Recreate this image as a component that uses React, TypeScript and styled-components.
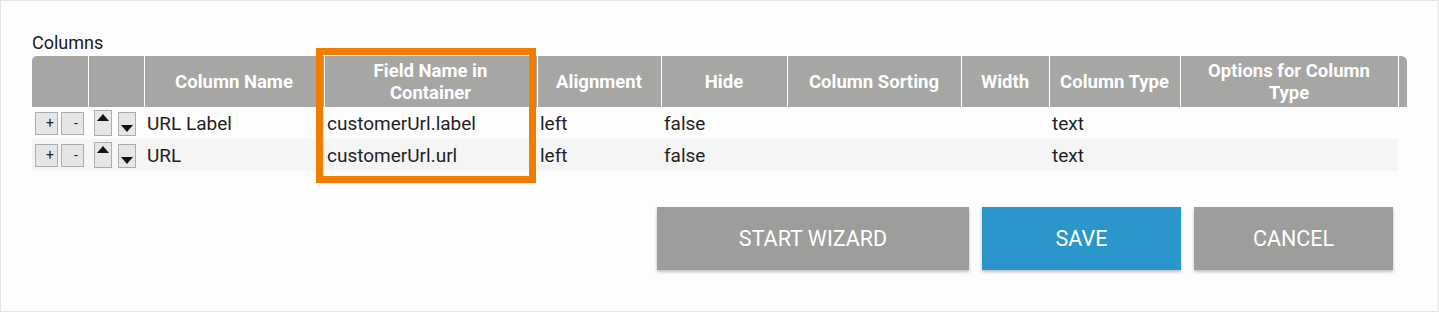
import * as React from "react";
import styled, { createGlobalStyle } from "styled-components";

const GlobalStyle = createGlobalStyle`
  html, body {
    margin: 0;
    padding: 0;
    background: #ffffff;
    font-family: Roboto, "Liberation Sans", sans-serif;
  }
`;

const Frame = styled.section`
  position: relative;
  box-sizing: border-box;
  width: 1439px;
  height: 312px;
  border: 1px solid #e4e4e4;
  background: #fdfdfd;
  padding: 31px 31px 0 31px;
`;

const Label = styled.div`
  font-size: 18px;
  line-height: 21px;
  color: #1a1a1a;
  margin-bottom: 3px;
`;

const Table = styled.table`
  border-collapse: collapse;
  table-layout: fixed;
  width: 1375px;
`;

const HeadCell = styled.th<{ $first?: boolean }>`
  background: #a6a6a5;
  color: #ffffff;
  font-weight: 700;
  font-size: 18.5px;
  line-height: 22px;
  height: 51px;
  padding: 0 9px;
  text-align: center;
  vertical-align: middle;
  border-left: ${(p) => (p.$first ? "none" : "1px solid #ffffff")};
  box-sizing: border-box;

  &:first-child {
    border-top-left-radius: 5px;
  }
  &:last-child {
    border-top-right-radius: 6px;
    padding: 0;
  }
`;

const Row = styled.tr<{ $striped?: boolean }>`
  background: ${(p) => (p.$striped ? "#f5f5f5" : "transparent")};
`;

const Cell = styled.td<{ $gutter?: boolean }>`
  height: 32px;
  padding: 0 3px;
  font-size: 19px;
  color: #1f1f1f;
  vertical-align: middle;
  white-space: nowrap;
  background: ${(p) => (p.$gutter ? "#fdfdfd" : "inherit")};
`;

const ToolCell = styled.td`
  height: 32px;
  padding: 0 0 0 3px;
  vertical-align: middle;
`;

const ButtonPair = styled.div<{ $gap: number; $offset: number }>`
  display: flex;
  align-items: flex-start;
  gap: ${(p) => p.$gap}px;
  padding-left: ${(p) => p.$offset}px;
`;

const SmallButton = styled.button`
  box-sizing: border-box;
  width: 23px;
  height: 23px;
  padding: 0 0 0 7px;
  border: 1px solid #adadad;
  background: #e6e6e6;
  font-family: Roboto, "Liberation Sans", sans-serif;
  font-size: 14px;
  color: #222;
  line-height: 20px;
`;

const ArrowButton = styled.button<{ $down?: boolean }>`
  box-sizing: border-box;
  width: 18px;
  height: ${(p) => (p.$down ? "24px" : "26px")};
  margin-top: ${(p) => (p.$down ? "1px" : "-1px")};
  padding: 0;
  border: 1px solid #adadad;
  background: #e6e6e6;
  display: flex;
  justify-content: center;
  align-items: ${(p) => (p.$down ? "flex-end" : "flex-start")};
  padding-top: ${(p) => (p.$down ? "0" : "3px")};
  padding-bottom: ${(p) => (p.$down ? "3px" : "0")};
`;

const Actions = styled.div`
  display: flex;
  justify-content: flex-end;
  gap: 13px;
  margin-top: 36px;
  padding-right: 14px;
`;

const ActionButton = styled.button<{ $primary?: boolean; $w: number }>`
  width: ${(p) => p.$w}px;
  height: 63px;
  border: none;
  background: ${(p) => (p.$primary ? "#2b96cc" : "#9d9d9b")};
  color: #ffffff;
  font-family: Roboto, "Liberation Sans", sans-serif;
  font-size: 21.5px;
  box-shadow: 0 2px 3px rgba(0, 0, 0, 0.25);
`;

const Highlight = styled.div`
  position: absolute;
  left: 315px;
  top: 47px;
  width: 220px;
  height: 135px;
  box-sizing: border-box;
  border: 7px solid #f07c00;
  pointer-events: none;
`;

const widths = [56, 56, 180, 213, 124, 126, 174, 88, 131, 218, 9];
const headings = [
  "",
  "",
  "Column Name",
  "Field Name in Container",
  "Alignment",
  "Hide",
  "Column Sorting",
  "Width",
  "Column Type",
  "Options for Column Type",
  "",
];

const rows = [
  ["URL Label", "customerUrl.label", "left", "false", "", "", "text", ""],
  ["URL", "customerUrl.url", "left", "false", "", "", "text", ""],
];

function Arrow({ down }: { down?: boolean }) {
  return (
    <svg width="12" height="7" viewBox="0 0 12 7">
      <polygon points={down ? "0,0 12,0 6,7" : "0,7 12,7 6,0"} fill="#111" />
    </svg>
  );
}

export default function App() {
  return (
    <>
      <GlobalStyle />
      <Frame>
        <Label>Columns</Label>
        <Table>
          <colgroup>
            {widths.map((w, i) => (
              <col key={i} style={{ width: w }} />
            ))}
          </colgroup>
          <thead>
            <tr>
              {headings.map((h, i) => (
                <HeadCell key={i} $first={i === 0}>
                  {h}
                </HeadCell>
              ))}
            </tr>
          </thead>
          <tbody>
            {rows.map((r, i) => (
              <Row key={i} $striped={i === 1}>
                <ToolCell>
                  <ButtonPair $gap={3} $offset={0}>
                    <SmallButton>+</SmallButton>
                    <SmallButton>-</SmallButton>
                  </ButtonPair>
                </ToolCell>
                <ToolCell>
                  <ButtonPair $gap={6} $offset={3}>
                    <ArrowButton>
                      <Arrow />
                    </ArrowButton>
                    <ArrowButton $down>
                      <Arrow down />
                    </ArrowButton>
                  </ButtonPair>
                </ToolCell>
                {r.map((c, j) => (
                  <Cell key={j}>{c}</Cell>
                ))}
                <Cell $gutter />
              </Row>
            ))}
          </tbody>
        </Table>
        <Actions>
          <ActionButton $w={312}>START WIZARD</ActionButton>
          <ActionButton $w={199} $primary>
            SAVE
          </ActionButton>
          <ActionButton $w={199}>CANCEL</ActionButton>
        </Actions>
        <Highlight />
      </Frame>
    </>
  );
}
